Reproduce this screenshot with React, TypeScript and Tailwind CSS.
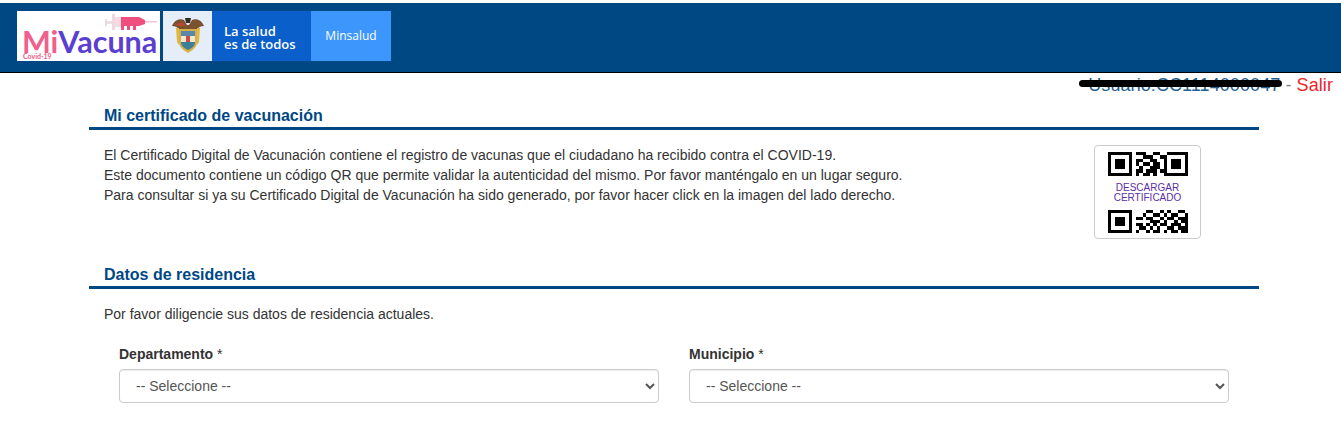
// rows of the two QR pieces, 1 = black module
const topRows = [
  "11111110111001100111111",
  "10000010001110011000001",
  "10111010110011001011101",
  "10111010101101101011101",
  "10111010010011101011101",
  "10000010110111011000001",
  "11111110101101001111111",
];
const bottomRows = [
  "11111110000110010100110",
  "10000010001001101011001",
  "10111010110110010110111",
  "10111010000011101001011",
  "10111010110101011011101",
  "10000010011010100110111",
  "11111110100101101011011",
];

function QrPiece({ rows, className }: { rows: string[]; className: string }) {
  return (
    <svg className={className} viewBox={`0 0 ${rows[0].length} ${rows.length}`} preserveAspectRatio="none" shapeRendering="crispEdges">
      {rows.map((row, y) =>
        row.split("").map((c, x) => (c === "1" ? <rect key={`${x}-${y}`} x={x} y={y} width="1" height="1" fill="#000" /> : null)),
      )}
    </svg>
  );
}

function Syringe() {
  return (
    <svg className="absolute left-[88px] top-[2px] h-[18px] w-[52px]" viewBox="0 0 52 18">
      <rect x="0" y="6" width="2" height="7" fill="#f0d5de" />
      <rect x="2" y="8" width="6" height="3" fill="#eadfe4" />
      <rect x="7" y="1" width="3" height="16" fill="#efd9e0" />
      <rect x="10" y="4" width="6" height="10" fill="#f6dbe3" />
      <path d="M16 4h18l6 3v4l-6 2h-3v4h-3v-4h-3v4h-3v-4h-3v4h-3z" fill="#ee4f7d" />
      <rect x="40" y="8" width="12" height="1.5" fill="#f2c3d2" />
    </svg>
  );
}

function Shield() {
  return (
    <svg className="h-[38px] w-[34px]" viewBox="0 0 34 38">
      <path d="M1 9c2-5 7-8 12-6l3 5h2l3-5c5-2 10 1 12 6-3 0-5 1-7 3H8c-2-2-4-3-7-3z" fill="#7a5230" />
      <path d="M4 8c3-2 6-3 9-2l2 3H9z" fill="#b5482f" />
      <path d="M14 1h6l-1 5h-4z" fill="#2c2c24" />
      <path d="M5 11h3v17l-2-3zM29 11h-3v17l2-3z" fill="#e3b93f" />
      <path d="M8 12h18v13c0 5-4 8-9 11-5-3-9-6-9-11z" fill="#d8b04a" />
      <rect x="10" y="14" width="14" height="5" fill="#5d87a8" />
      <rect x="10" y="19" width="14" height="6" fill="#eee8d6" />
      <rect x="15" y="19" width="4" height="7" fill="#d0493f" />
      <path d="M10 25h14c0 4-3 6-7 8-4-2-7-4-7-8z" fill="#3f7f95" />
    </svg>
  );
}

function Logos() {
  return (
    <div className="flex h-[50px] items-stretch">
      <div className="relative mr-[3px] w-[143px] bg-white">
        <Syringe />
        <div className="absolute left-[5px] top-[19px] whitespace-nowrap font-['Lato',sans-serif] text-[30.5px] font-bold leading-[22px]">
          <span className="text-[#f0608f]">Mi</span>
          <span className="text-[#5a3fd0]">Vacuna</span>
        </div>
        <div className="absolute bottom-[0px] left-[6px] font-['Lato',sans-serif] text-[7px] font-bold leading-[9px] text-[#ee5b86]">
          Covid-19
        </div>
      </div>
      <div className="flex w-[49px] items-center justify-center bg-[#e4edf8]">
        <Shield />
      </div>
      <div className="flex w-[99px] items-center bg-[#0a5fcb] pl-[12px] pt-[4px] font-['Open_Sans',sans-serif] text-[13px] font-semibold leading-[13px] text-white">
        <div>
          La salud
          <br />
          es de todos
        </div>
      </div>
      <div className="flex w-[80px] items-center justify-center bg-[#3d96fb] font-['Open_Sans',sans-serif] text-[12px] font-medium text-white">
        Minsalud
      </div>
    </div>
  );
}

function SectionTitle({ children }: { children: string }) {
  return (
    <h2 className="border-b-[3px] border-[#004884] pl-[15px] text-[16px] font-bold leading-[22px] text-[#004884]">
      {children}
    </h2>
  );
}

function Field({ label }: { label: string }) {
  return (
    <div className="w-[540px]">
      <label className="block text-[14px] font-bold leading-[20px] text-[#333]">
        {label} <span className="font-normal">*</span>
      </label>
      <select className="mt-[5px] block h-[34px] w-full rounded-[4px] border border-[#ccc] bg-white pl-[12px] text-[14px] text-[#555] shadow-[inset_0_1px_1px_rgba(0,0,0,0.075)]">
        <option>-- Seleccione --</option>
      </select>
    </div>
  );
}

export default function App() {
  return (
    <div className="h-[439px] overflow-hidden bg-white font-['Liberation_Sans',Arial,sans-serif] text-[#333]">
      <header className="mt-[3px] flex h-[70px] items-start border-b border-black bg-[#004884] pl-[17px] pt-[8px]">
        <Logos />
      </header>

      <div className="flex h-[25px] justify-end pr-[8px] text-[18px] leading-[25px] tracking-[0.08px]">
        <div className="relative text-[#1f5f8f]">
          Usuario:CC1114000047 <span className="text-[#888]">-</span> <span className="text-[#e8262d]">Salir</span>
          <div className="absolute left-[-9px] top-[7px] h-[7px] w-[203px] rounded-full bg-black" />
        </div>
      </div>

      <main className="mx-[89px] w-[1170px]">
        <section className="pt-[7px]">
          <SectionTitle>Mi certificado de vacunación</SectionTitle>
          <div className="flex justify-between pl-[15px] pr-[58px] pt-[15px]">
            <p className="text-[14px] leading-[20px] text-[#333]">
              El Certificado Digital de Vacunación contiene el registro de vacunas que el ciudadano ha recibido contra el COVID-19.
              <br />
              Este documento contiene un código QR que permite validar la autenticidad del mismo. Por favor manténgalo en un lugar seguro.
              <br />
              Para consultar si ya su Certificado Digital de Vacunación ha sido generado, por favor hacer click en la imagen del lado derecho.
            </p>
            <a className="flex h-[94px] w-[107px] flex-col items-center rounded-[4px] border border-[#ccc] bg-white pt-[6px]">
              <QrPiece rows={topRows} className="h-[24px] w-[80px]" />
              <div className="mt-[7px] text-center text-[10px] leading-[10px] text-[#5b2ea6]">
                DESCARGAR
                <br />
                CERTIFICADO
              </div>
              <QrPiece rows={bottomRows} className="mt-[7px] h-[23px] w-[80px]" />
            </a>
          </div>
        </section>

        <section className="pt-[25px]">
          <SectionTitle>Datos de residencia</SectionTitle>
          <p className="pl-[15px] pt-[15px] text-[14px] leading-[20px] text-[#333]">
            Por favor diligencie sus datos de residencia actuales.
          </p>
          <div className="flex gap-[30px] pl-[30px] pt-[20px]">
            <Field label="Departamento" />
            <Field label="Municipio" />
          </div>
        </section>
      </main>
    </div>
  );
}
